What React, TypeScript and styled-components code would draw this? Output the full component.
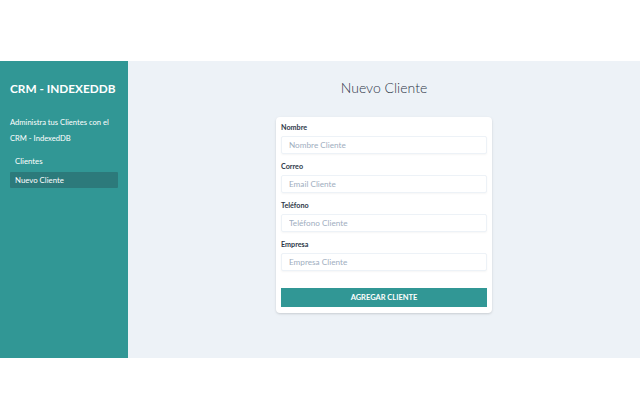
import * as React from 'react'
import styled, { createGlobalStyle } from 'styled-components'

const GlobalStyle = createGlobalStyle`
  html, body {
    margin: 0;
    padding: 0;
    background: #ffffff;
    font-family: Lato, "Open Sans", sans-serif;
  }
  * {
    box-sizing: border-box;
  }
`

const Layout = styled.div`
  display: flex;
  margin-top: 61px;
  height: 297px;
`

const Sidebar = styled.aside`
  width: 128px;
  flex-shrink: 0;
  background: #319795;
  padding: 19px 10px;
  color: #ffffff;
`

const Brand = styled.h1`
  margin: 0;
  font-size: 11.8px;
  line-height: 18px;
  font-weight: 700;
  white-space: nowrap;
`

const Tagline = styled.p`
  margin: 16px 0 0;
  font-size: 7.6px;
  line-height: 16px;
`

const Nav = styled.nav`
  margin-top: 7px;
  display: flex;
  flex-direction: column;
  gap: 3px;
`

const NavLink = styled.a<{ $active?: boolean }>`
  display: block;
  height: 16px;
  line-height: 16px;
  padding: 0 5px;
  font-size: 7.8px;
  color: #ffffff;
  text-decoration: none;
  border-radius: 1px;
  background: ${(p) => (p.$active ? '#2c7a7b' : 'transparent')};
`

const Main = styled.main`
  flex: 1;
  background: #edf2f7;
  padding-top: 17px;
  display: flex;
  flex-direction: column;
  align-items: center;
`

const Title = styled.h2`
  margin: 0;
  font-size: 14px;
  line-height: 20px;
  font-weight: 300;
  color: #2d3748;
`

const Card = styled.form`
  margin-top: 19px;
  width: 216px;
  background: #ffffff;
  border-radius: 4px;
  box-shadow: 0 1px 3px rgba(0, 0, 0, 0.1), 0 1px 2px rgba(0, 0, 0, 0.06);
  padding: 6px 5px;
`

const Field = styled.div`
  & + & {
    margin-top: 8px;
  }
`

const Label = styled.label`
  display: block;
  font-size: 7.2px;
  line-height: 10px;
  font-weight: 700;
  color: #2d3748;
`

const Input = styled.input`
  display: block;
  margin-top: 3px;
  width: 100%;
  height: 18px;
  padding: 0 7px;
  border: 1px solid #edf2f7;
  border-radius: 2px;
  box-shadow: 0 1px 2px rgba(0, 0, 0, 0.04);
  font-family: inherit;
  font-size: 8.2px;
  color: #2d3748;
  outline: none;
  &::placeholder {
    color: #a0aec0;
  }
`

const Submit = styled.button`
  display: block;
  margin-top: 17px;
  width: 100%;
  height: 19px;
  border: none;
  background: #319795;
  color: #ffffff;
  font-family: inherit;
  font-size: 7.5px;
  font-weight: 700;
  text-transform: uppercase;
  cursor: pointer;
`

const fields = [
  { label: 'Nombre', placeholder: 'Nombre Cliente' },
  { label: 'Correo', placeholder: 'Email Cliente' },
  { label: 'Teléfono', placeholder: 'Teléfono Cliente' },
  { label: 'Empresa', placeholder: 'Empresa Cliente' },
]

export default function App() {
  return (
    <>
      <GlobalStyle />
      <Layout>
        <Sidebar>
          <Brand>CRM - INDEXEDDB</Brand>
          <Tagline>Administra tus Clientes con el CRM - IndexedDB</Tagline>
          <Nav>
            <NavLink href="#">Clientes</NavLink>
            <NavLink href="#" $active>Nuevo Cliente</NavLink>
          </Nav>
        </Sidebar>
        <Main>
          <Title>Nuevo Cliente</Title>
          <Card onSubmit={(e) => e.preventDefault()}>
            {fields.map((f) => (
              <Field key={f.label}>
                <Label>{f.label}</Label>
                <Input type="text" placeholder={f.placeholder} />
              </Field>
            ))}
            <Submit type="submit">Agregar Cliente</Submit>
          </Card>
        </Main>
      </Layout>
    </>
  )
}
